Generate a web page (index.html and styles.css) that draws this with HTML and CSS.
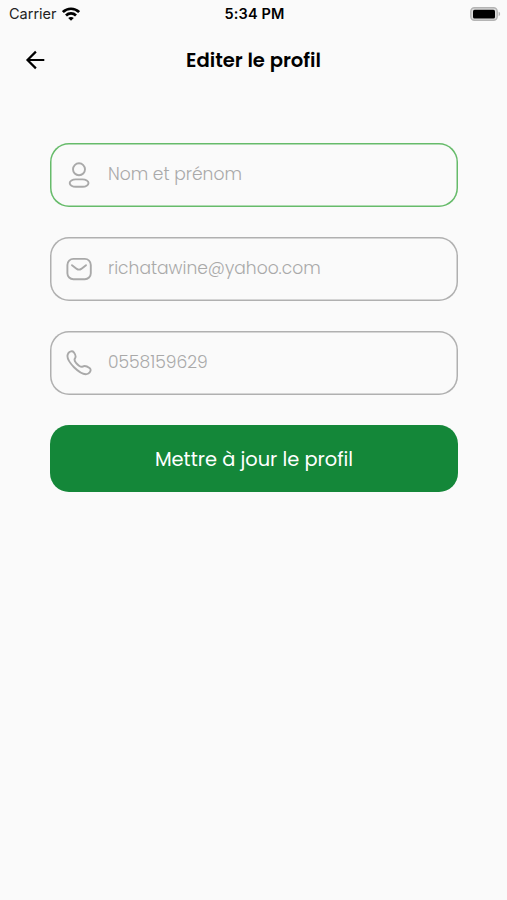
FILE: index.html
```
<!DOCTYPE html>
<html lang="fr">
<head>
  <meta charset="UTF-8" />
  <meta name="viewport" content="width=device-width, initial-scale=1.0"/>
  <title>Editer le profil</title>
  <link rel="stylesheet" href="styles.css">
</head>
<body>

  <div class="status-bar">
    <div class="carrier">
      <span>Carrier</span>
      <svg class="wifi" viewBox="0 0 18 14" fill="none" stroke="#000" stroke-width="2.7">
        <path d="M0.9 5.1C5.4 0.6 12.6 0.6 17.1 5.1"/>
        <path d="M4 8.5C6.8 5.7 11.2 5.7 14 8.5"/>
        <path d="M9 13.8L6.2 11C7.7 9.5 10.3 9.5 11.8 11Z" fill="#000" stroke="none"/>
      </svg>
    </div>
    <span class="time">5:34 PM</span>
    <svg class="battery" viewBox="0 0 31 14">
      <rect x="0.8" y="0.8" width="26.4" height="12.4" rx="3.6" fill="#dcdcdc" stroke="#b4b4b4" stroke-width="1.4"/>
      <rect x="3" y="2.7" width="22" height="8.8" rx="1.6" fill="#000"/>
      <path d="M28.6 4.8C30.6 5.4 30.6 8.6 28.6 9.2Z" fill="#b4b4b4"/>
    </svg>
  </div>

  <header class="header">
    <button class="back" aria-label="Retour">
      <svg viewBox="0 0 20 20" fill="none" stroke="#000" stroke-width="2.2">
        <path d="M19.3 10H2.7M10.9 1.6L2.5 10L10.9 18.4"/>
      </svg>
    </button>
    <h1>Editer le profil</h1>
  </header>

  <form class="form">
    <label class="field active">
      <svg viewBox="0 0 28 28">
        <circle cx="14" cy="8.3" r="6"/>
        <rect x="4.7" y="18.4" width="18.8" height="7.4" rx="6" ry="3.7"/>
      </svg>
      <input type="text" placeholder="Nom et prénom">
    </label>
    <label class="field">
      <svg viewBox="0 0 28 28">
        <rect x="2.4" y="3.9" width="23.4" height="20.4" rx="6"/>
        <path d="M7 10.2L11.8 13.9Q14 15.4 16.2 13.9L21 10.2"/>
      </svg>
      <input type="text" placeholder="richatawine@yahoo.com">
    </label>
    <label class="field">
      <svg viewBox="0 0 28 28">
        <path d="M3.2 4.4C4.6 2.3 7.4 1.5 8.8 3.3C10.2 5.2 11.6 7.3 10 9.4C9 10.8 9.4 12 11 13.8C12.9 15.9 15.4 18.6 17.6 17.6C20.4 15.8 22.6 17.6 24.8 19.2C26.4 20.8 25.4 23.3 23.4 24.5C19.4 26.8 13.6 22.7 9 18.2C4.4 13.5 0.8 8.3 3.2 4.4Z"/>
      </svg>
      <input type="text" placeholder="0558159629">
    </label>
    <button class="submit" type="button">Mettre à jour le profil</button>
  </form>

</body>
</html>
```
FILE: styles.css
```
:root {
  --bg: #fafafa;
  --grey: #a9a9a9;
  --line: #b0b0b0;
  --green: #148739;
  --green-line: #66bb6a;
}

* {
  box-sizing: border-box;
}

body {
  margin: 0;
  min-height: 100vh;
  background: var(--bg);
  font-family: 'Poppins', 'Inter', sans-serif;
  color: #000;
}

.status-bar {
  display: grid;
  grid-template-columns: 1fr auto 1fr;
  align-items: center;
  height: 27px;
  padding: 0 7px 0 9px;
  font-family: 'Inter', sans-serif;
  font-size: 14.5px;
}

.carrier {
  display: flex;
  align-items: center;
  gap: 5px;
  color: #222;
}

.wifi {
  width: 18px;
  height: 14px;
}

.time {
  font-size: 14.5px;
  font-weight: 600;
  letter-spacing: 0.15px;
}

.battery {
  width: 31px;
  height: 14px;
  justify-self: end;
  margin-right: -1px;
}

.header {
  display: grid;
  grid-template-columns: 1fr auto 1fr;
  align-items: center;
  height: 66px;
  padding: 0 25px;
}

.header h1 {
  margin: 0;
  font-size: 19.6px;
  font-weight: 600;
}

.back {
  width: 20px;
  height: 20px;
  padding: 0;
  border: none;
  background: none;
}

.back svg {
  display: block;
}

.form {
  display: flex;
  flex-direction: column;
  gap: 30px;
  padding: 49.5px 49px 0 50px;
}

.field {
  display: flex;
  align-items: center;
  gap: 15px;
  height: 64px;
  padding: 0 15px;
  border-radius: 19px;
  box-shadow: inset 0 0 0 1.5px var(--line);
}

.field.active {
  box-shadow: inset 0 0 0 1.5px var(--green-line);
}

.field svg {
  flex: none;
  width: 28px;
  height: 28px;
  fill: none;
  stroke: var(--grey);
  stroke-width: 1.9;
  stroke-linecap: round;
  stroke-linejoin: round;
}

.field input {
  flex: 1;
  min-width: 0;
  padding: 0 0 1px;
  border: none;
  outline: none;
  background: none;
  font-family: inherit;
  font-size: 17.1px;
  font-weight: 300;
}

.field input::placeholder {
  color: var(--grey);
}

.submit {
  height: 67px;
  padding-top: 3px;
  border: none;
  border-radius: 19px;
  background: var(--green);
  color: #fff;
  font-family: inherit;
  font-size: 19.4px;
  font-weight: 400;
}
```
